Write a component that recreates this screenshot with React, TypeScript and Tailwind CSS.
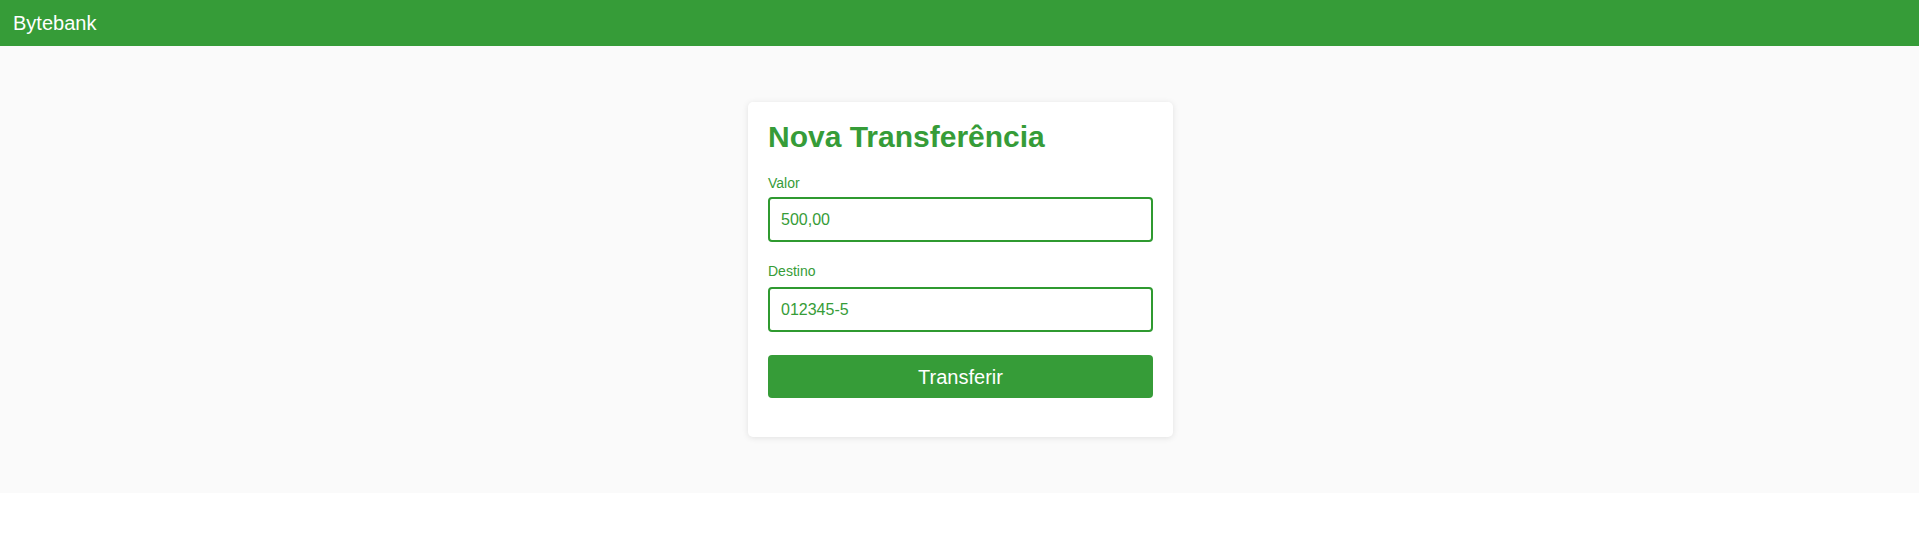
import React from "react";

export default function App() {
  return (
    <div className="w-full bg-white font-['Liberation_Sans',Arial,sans-serif]">
      <header className="h-[46px] bg-[#369c38] flex items-center px-[13px]">
        <span className="text-white text-[20px] leading-none">Bytebank</span>
      </header>
      <main className="bg-[#fafafa] pt-[56px] pb-[56px] flex justify-center">
        <div className="w-[425px] ml-[2px] bg-white rounded-[5px] shadow-[0_1px_6px_rgba(0,0,0,0.1)] px-[20px] pt-[17px] pb-[39px]">
          <h1 className="text-[30px] leading-[36px] font-bold text-[#369c38] mb-[20px]">
            Nova Transferência
          </h1>
          <label className="block text-[14px] leading-[16px] text-[#369c38] mb-[6px]">Valor</label>
          <input
            readOnly
            value="500,00"
            className="block w-full h-[45px] border-2 border-[#2f9a30] rounded-[4px] px-[11px] text-[16px] text-[#369c38] bg-white outline-none"
          />
          <label className="block mt-[21px] text-[14px] leading-[16px] text-[#369c38] mb-[8px]">Destino</label>
          <input
            readOnly
            value="012345-5"
            className="block w-full h-[45px] border-2 border-[#2f9a30] rounded-[4px] px-[11px] text-[16px] text-[#369c38] bg-white outline-none"
          />
          <button className="mt-[23px] w-full h-[43px] bg-[#369c38] text-white text-[20px] rounded-[4px]">
            Transferir
          </button>
        </div>
      </main>
    </div>
  );
}
